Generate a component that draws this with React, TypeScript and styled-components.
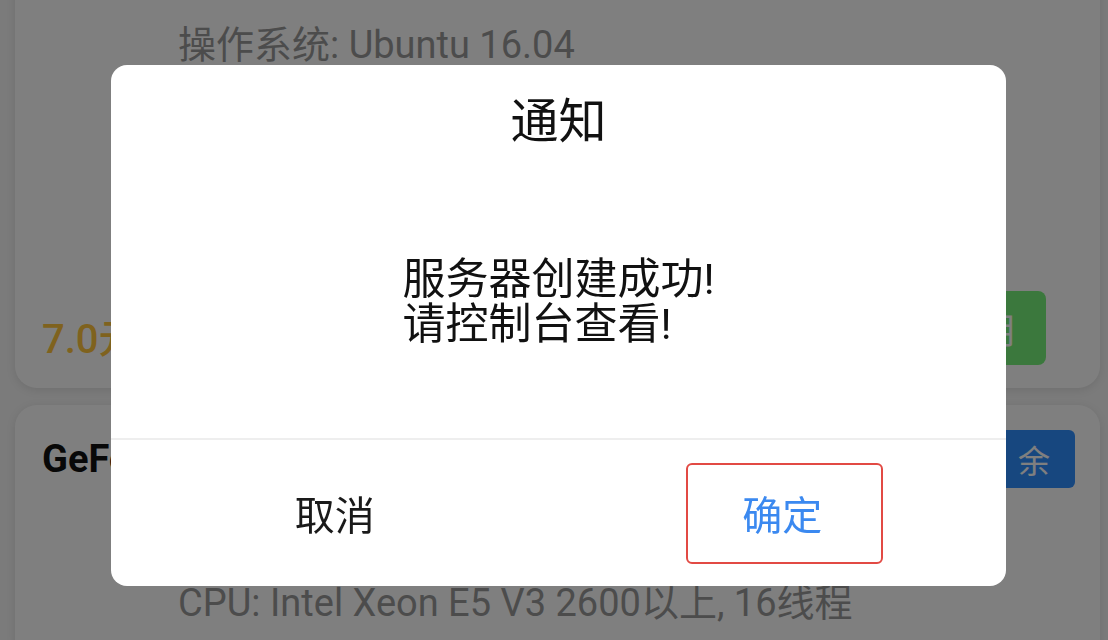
import React from "react";
import styled, { createGlobalStyle } from "styled-components";

const GlobalStyle = createGlobalStyle`
  html, body {
    margin: 0;
    padding: 0;
    width: 1108px;
    height: 640px;
    overflow: hidden;
    background: #f6f6f6;
    font-family: Roboto, "Noto Sans CJK SC", sans-serif;
  }
  * { box-sizing: border-box; }
`;

const Page = styled.div`
  display: flex;
  flex-direction: column;
  gap: 17px;
  padding: 0 8px 0 15px;
  margin-top: -223px;
`;

const Card = styled.section<{ $padRight: number }>`
  background: #ffffff;
  border-radius: 22px;
  box-shadow: 0 2px 10px rgba(0, 0, 0, 0.1);
  padding: 25px ${(p) => p.$padRight}px 23px 27px;
  display: flex;
  flex-direction: column;
`;

const TitleRow = styled.div`
  display: flex;
  align-items: center;
  justify-content: space-between;
  height: 58px;
`;

const CardTitle = styled.h2`
  margin: 0;
  font-size: 38px;
  font-weight: 700;
  color: #111;
  line-height: 58px;
`;

const Badge = styled.span`
  display: flex;
  align-items: center;
  justify-content: center;
  height: 58px;
  padding: 0 13px 0 25px;
  border-radius: 6px;
  background: #2f8fff;
  color: #ffffff;
  font-size: 32px;
  letter-spacing: 12px;
`;

const SpecList = styled.ul`
  list-style: none;
  margin: 10px 0 0;
  padding: 0 0 0 136px;
`;

const Spec = styled.li`
  font-size: 38px;
  line-height: 70px;
  color: #999999;
  white-space: nowrap;
`;

const Footer = styled.div`
  display: flex;
  align-items: flex-end;
  justify-content: space-between;
  margin-top: 71px;
`;

const Price = styled.span`
  font-size: 40px;
  font-weight: 500;
  color: #ffc53d;
  line-height: 50px;
`;

const BuyButton = styled.button`
  height: 74px;
  padding: 0 30px;
  border: none;
  border-radius: 8px;
  background: #76f07a;
  color: #ffffff;
  font-family: inherit;
  font-size: 36px;
`;

const Overlay = styled.div`
  position: fixed;
  inset: 0;
  background: rgba(0, 0, 0, 0.5);
  display: flex;
  align-items: flex-start;
  padding: 65px 0 0 111px;
`;

const Dialog = styled.div`
  width: 895px;
  background: #ffffff;
  border-radius: 16px;
  overflow: hidden;
  display: flex;
  flex-direction: column;
`;

const DialogTitle = styled.div`
  padding-top: 28px;
  text-align: center;
  font-size: 48px;
  line-height: 58px;
  color: #111;
`;

const DialogBody = styled.div`
  display: flex;
  justify-content: center;
  padding: 106px 0 91px;
`;

const Message = styled.div`
  text-align: left;
  font-size: 43px;
  line-height: 45px;
  color: #111;
  white-space: pre-line;
`;

const DialogFooter = styled.div`
  display: flex;
  height: 148px;
  border-top: 2px solid #eeeeee;
`;

const FooterButton = styled.button<{ $primary?: boolean }>`
  flex: 1;
  display: flex;
  align-items: center;
  justify-content: center;
  border: none;
  background: transparent;
  padding: 0;
  font-family: inherit;
  font-size: 40px;
  color: ${(p) => (p.$primary ? "#3b89f0" : "#1a1a1a")};
`;

const FocusRing = styled.span`
  display: flex;
  align-items: center;
  justify-content: center;
  width: 197px;
  height: 101px;
  margin-left: 5px;
  padding-right: 5px;
  border: 2px solid #e24a44;
  border-radius: 6px;
`;

export default function App() {
  return (
    <>
      <GlobalStyle />
      <Page>
        <Card $padRight={54}>
          <TitleRow>
            <CardTitle>GeForce GTX 1080Ti</CardTitle>
          </TitleRow>
          <SpecList>
            <Spec>GPU: GeForce GTX 1080Ti 11G</Spec>
            <Spec>内存: 32G</Spec>
            <Spec>操作系统: Ubuntu 16.04</Spec>
            <Spec>硬盘: 500G SSD</Spec>
            <Spec>带宽: 10Mbps</Spec>
          </SpecList>
          <Footer>
            <Price>7.0元/小时</Price>
            <BuyButton>立即租用</BuyButton>
          </Footer>
        </Card>
        <Card $padRight={25}>
          <TitleRow>
            <CardTitle>GeForce RTX 2080Ti</CardTitle>
            <Badge>剩余</Badge>
          </TitleRow>
          <SpecList>
            <Spec>GPU: GeForce RTX 2080Ti 11G</Spec>
            <Spec>CPU: Intel Xeon E5 V3 2600以上, 16线程</Spec>
          </SpecList>
        </Card>
      </Page>
      <Overlay>
        <Dialog role="dialog">
          <DialogTitle>通知</DialogTitle>
          <DialogBody>
            <Message>{"服务器创建成功!\n请控制台查看!"}</Message>
          </DialogBody>
          <DialogFooter>
            <FooterButton>取消</FooterButton>
            <FooterButton $primary>
              <FocusRing>确定</FocusRing>
            </FooterButton>
          </DialogFooter>
        </Dialog>
      </Overlay>
    </>
  );
}
